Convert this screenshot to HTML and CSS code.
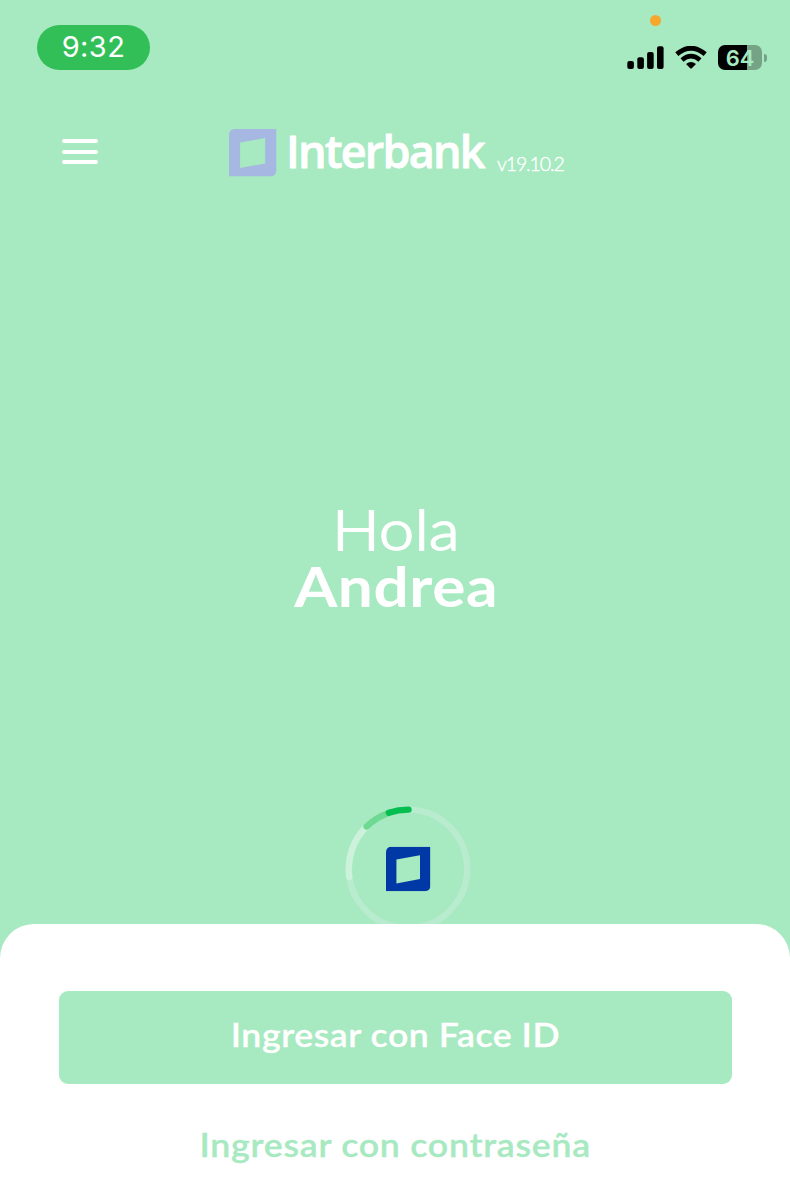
FILE: index.html
```html
<!DOCTYPE html>
<html lang="es">
<head>
    <meta charset="UTF-8">
    <meta name="viewport" content="width=device-width, initial-scale=1.0">
    <title>Interbank</title>
    <link rel="stylesheet" href="styles.css">
</head>
<body>
    <div class="screen">
        <div class="status-bar">
            <div class="time">9:32</div>
            <div class="status-icons">
                <span class="mic-dot"></span>
                <svg class="signal" width="37" height="23" viewBox="0 0 37 23">
                    <rect x="0.3" y="15" width="6.6" height="8" rx="2"/>
                    <rect x="10.3" y="11.3" width="6.6" height="11.7" rx="2"/>
                    <rect x="20.1" y="6" width="6.6" height="17" rx="2"/>
                    <rect x="30" y="0.3" width="6.6" height="22.7" rx="2"/>
                </svg>
                <svg class="wifi" width="32" height="23" viewBox="0 0 32 23">
                    <path d="M1.8 8.2 Q16 -3.8 30.2 8.2" fill="none" stroke="#000" stroke-width="4.8"/>
                    <path d="M7 13.9 Q16 6.3 25 13.9" fill="none" stroke="#000" stroke-width="4.6"/>
                    <path d="M11 18 Q16 13.8 21 18 L16.8 22.2 Q16 23 15.2 22.2 Z"/>
                </svg>
                <div class="battery"><span>64</span></div>
                <div class="battery-tip"></div>
            </div>
        </div>

        <div class="header">
            <div class="menu">
                <span></span>
                <span></span>
                <span></span>
            </div>
            <svg class="logo" width="48" height="48" viewBox="0 0 134 134">
                <path fill-rule="evenodd" d="M17 0H132V115Q132 132 115 132H0V17Q0 0 17 0ZM31 38V109L101 96V25Z"/>
            </svg>
            <span class="brand">Interbank</span>
            <span class="version">v19.10.2</span>
        </div>

        <div class="greeting">
            <div class="hello">Hola</div>
            <div class="name">Andrea</div>
        </div>

        <!-- Token ring, its lower edge goes under the sheet -->
        <div class="token">
            <svg width="126" height="126" viewBox="0 -0.8 126 126">
                <g fill="none" stroke-width="6.4" stroke-linecap="round">
                    <circle cx="63" cy="63" r="59.2" stroke="#b9ebcf"/>
                    <path d="M4.3 71.2A59.2 59.2 0 0 1 21.3 21" stroke="#cdf2dc"/>
                    <path d="M21.6 20.7A59.2 59.2 0 0 1 43.6 7.1" stroke="#6fd993"/>
                    <path d="M43.9 7A59.2 59.2 0 0 1 63.5 3.8" stroke="#05be50"/>
                </g>
                <svg x="41" y="41" width="44.4" height="44.4" viewBox="0 0 132 132">
                    <path fill="#0039a6" fill-rule="evenodd" d="M17 0H132V115Q132 132 115 132H0V17Q0 0 17 0ZM31 38V109L101 96V25Z"/>
                </svg>
            </svg>
        </div>

        <div class="sheet">
            <button class="btn-primary"><span>Ingresar con Face ID</span></button>
            <button class="btn-link"><span>Ingresar con contraseña</span></button>
        </div>
    </div>
</body>
</html>
```
FILE: styles.css
```css
* {
    box-sizing: border-box;
}
body {
    margin: 0;
    background-color: #a7e9c0;
    font-family: Lato, sans-serif;
}
.screen {
    display: flex;
    flex-direction: column;
    width: 790px;
    height: 1200px;
    overflow: hidden;
    color: white;
}
.status-bar {
    display: flex;
    justify-content: space-between;
    align-items: flex-start;
    height: 128px;
    padding: 25px 23px 0 37px;
}
.time {
    width: 113px;
    height: 45px;
    border-radius: 23px;
    background-color: #32bf57;
    font: 400 29px/44px Inter, sans-serif;
    letter-spacing: 0.4px;
    text-align: center;
}
.status-icons {
    position: relative;
    display: flex;
    align-items: center;
    padding-top: 20px;
}
/* microphone in use */
.mic-dot {
    position: absolute;
    top: -10px;
    left: 23px;
    width: 11px;
    height: 11px;
    border-radius: 50%;
    background-color: #f5a82b;
}
.wifi {
    margin: 0 11px;
}
.battery {
    width: 44px;
    height: 25px;
    border-radius: 7px;
    background: linear-gradient(to right, #000 29px, #75a386 29px);
    color: #a7e9c0;
    font: 600 22px/26px Inter, sans-serif;
    text-align: center;
}
.battery-tip {
    width: 3px;
    height: 8px;
    margin-left: 2px;
    border-radius: 0 4px 4px 0;
    background-color: #75a386;
}
.header {
    display: flex;
    height: 49px;
    padding-left: 62px;
}
.menu {
    display: flex;
    flex-direction: column;
    gap: 6.5px;
    width: 36px;
    margin: 11px 131px 0 0;
}
.menu span {
    height: 4px;
    border-radius: 2px;
    background-color: white;
}
.logo {
    margin-top: 0.5px;
    fill: #a6b8e1;
}
.brand {
    width: 210px;
    margin-left: 9px;
    font: 600 45px/46px "Open Sans", sans-serif;
    letter-spacing: -1.8px;
    -webkit-text-stroke: 0.8px white;
}
.version {
    margin-left: 1px;
    font-size: 19.5px;
    font-weight: 300;
    line-height: 71px;
    letter-spacing: -1.1px;
    -webkit-text-stroke: 0.4px white;
}
.greeting {
    height: 628px;
    padding-top: 323px;
    text-align: center;
}
.hello {
    padding-left: 2px;
    font-size: 56px;
    font-weight: 300;
    line-height: 57px;
    letter-spacing: 0.5px;
    transform: scaleX(1.12);
    -webkit-text-stroke: 1.8px white;
}
.name {
    padding-left: 2px;
    font-size: 56px;
    font-weight: 700;
    line-height: 57px;
    letter-spacing: 0.5px;
    transform: scaleX(1.11);
}
.token {
    height: 119px;
    padding-left: 345px;
}
.sheet {
    position: relative;
    display: flex;
    flex-direction: column;
    flex: 1;
    padding: 67px 58px 0 59px;
    border-radius: 34px 34px 0 0;
    background-color: white;
}
button {
    border: none;
    font-family: Lato, sans-serif;
    font-size: 33px;
    font-weight: 600;
    letter-spacing: 0.5px;
    cursor: pointer;
}
button span {
    display: inline-block;
    transform: scaleX(1.08);
    -webkit-text-stroke: 0.3px;
}
.btn-primary {
    height: 93px;
    padding-bottom: 8px;
    border-radius: 9px;
    background-color: #a7e9c0;
    color: white;
}
.btn-link {
    height: 60px;
    margin-top: 30px;
    background: none;
    color: #a7e9c0;
    letter-spacing: 0.7px;
}
```
